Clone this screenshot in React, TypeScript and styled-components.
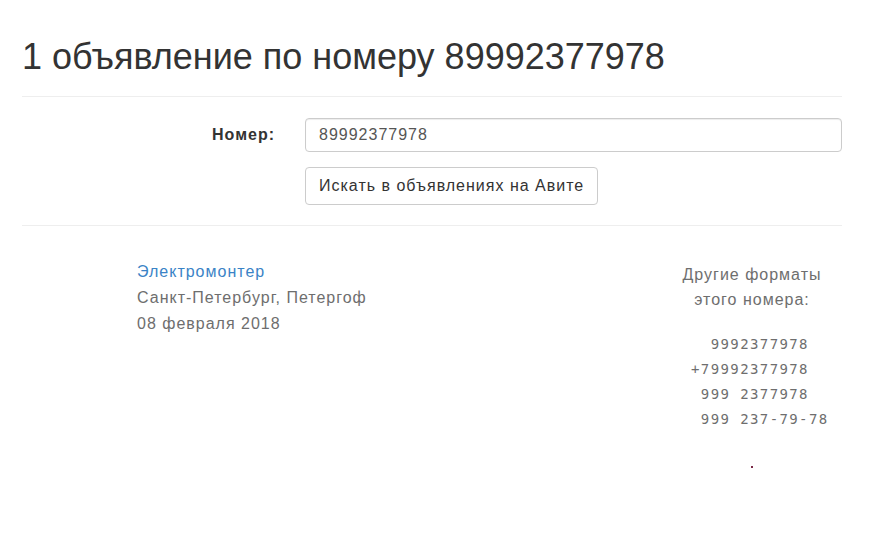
import React from "react";
import styled, { createGlobalStyle } from "styled-components";

const Global = createGlobalStyle`
  html, body { margin: 0; padding: 0; background: #fff; }
  body { font-family: "Liberation Sans", Arial, sans-serif; font-size: 16px; color: #333; }
`;

const Container = styled.div`
  width: 820px;
  margin-left: 22px;
`;

const Title = styled.h1`
  margin: 0;
  padding-top: 37px;
  padding-bottom: 19px;
  font-size: 36px;
  font-weight: 400;
  line-height: 40px;
  color: #333;
  border-bottom: 1px solid #eee;
`;

const Form = styled.form`
  display: grid;
  grid-template-columns: 253px 1fr;
  column-gap: 30px;
  row-gap: 15px;
  padding: 21px 0 20px;
  border-bottom: 1px solid #eee;
`;

const Label = styled.label`
  font-weight: 700;
  font-size: 16px;
  letter-spacing: 1px;
  text-align: right;
  align-self: center;
  color: #333;
`;

const Input = styled.input`
  box-sizing: border-box;
  height: 34px;
  width: 100%;
  padding: 0 13px;
  border: 1px solid #ccc;
  border-radius: 4px;
  font-family: "Liberation Sans", Arial, sans-serif;
  font-size: 16px;
  letter-spacing: 1px;
  color: #555;
  box-shadow: inset 0 1px 1px rgba(0, 0, 0, 0.075);
  outline: none;
`;

const Button = styled.button`
  grid-column: 2;
  justify-self: start;
  box-sizing: border-box;
  height: 38px;
  padding: 0 13px;
  border: 1px solid #ccc;
  border-radius: 4px;
  background: #fff;
  font-family: "Liberation Sans", Arial, sans-serif;
  font-size: 16px;
  letter-spacing: 1px;
  color: #333;
  cursor: pointer;
`;

const Results = styled.div`
  display: flex;
  justify-content: space-between;
  align-items: flex-start;
  padding-top: 33px;
`;

const Item = styled.div`
  padding-left: 115px;
  display: flex;
  flex-direction: column;
  line-height: 26px;
  letter-spacing: 1px;
  color: #6e6e6e;
`;

const ItemLink = styled.a`
  color: #3a83c6;
  text-decoration: none;
`;

const Formats = styled.div`
  width: 180px;
  margin-top: 3px;
  display: flex;
  flex-direction: column;
  align-items: center;
  line-height: 25px;
  letter-spacing: 1px;
  color: #6e6e6e;
`;

const FormatsTitle = styled.div`
  text-align: center;
  margin-bottom: 20px;
`;

const Numbers = styled.pre`
  margin: 0;
  align-self: flex-start;
  padding-left: 29px;
  font-family: "DejaVu Sans Mono", monospace;
  font-size: 14px;
  letter-spacing: 1.4px;
  line-height: 25px;
  color: #6e6e6e;
`;

const Pixel = styled.span`
  display: block;
  width: 2px;
  height: 2px;
  margin-top: 34px;
  background: #7a2846;
`;

export default function App() {
  return (
    <>
      <Global />
      <Container>
        <Title>1 объявление по номеру 89992377978</Title>
        <Form onSubmit={(e) => e.preventDefault()}>
          <Label htmlFor="num">Номер:</Label>
          <Input id="num" defaultValue="89992377978" />
          <Button type="submit">Искать в объявлениях на Авите</Button>
        </Form>
        <Results>
          <Item>
            <ItemLink href="#">Электромонтер</ItemLink>
            <span>Санкт-Петербург, Петергоф</span>
            <span>08 февраля 2018</span>
          </Item>
          <Formats>
            <FormatsTitle>
              Другие форматы
              <br />
              этого номера:
            </FormatsTitle>
            <Numbers>{"  9992377978\n+79992377978\n 999 2377978\n 999 237-79-78"}</Numbers>
            <Pixel />
          </Formats>
        </Results>
      </Container>
    </>
  );
}
